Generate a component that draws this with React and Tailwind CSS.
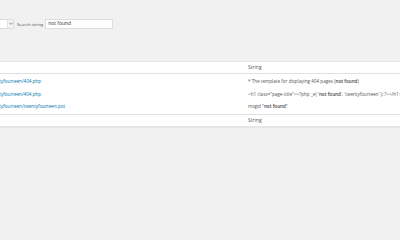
// Search results page (scaled down admin screen)
const rows = [
  {
    file: 'themes/twentyfourteen/404.php',
    pre: '* The template for displaying 404 pages (',
    hit: 'not found',
    post: ')',
  },
  {
    file: 'themes/twentyfourteen/404.php',
    pre: '<h1 class="page-title"><?php _e( \'',
    hit: 'not found',
    post: '\', \'twentyfourteen\' ); ?></h1>',
  },
  {
    file: 'themes/twentyfourteen/twentyfourteen.pot',
    pre: 'msgid "',
    hit: 'not found',
    post: '"',
  },
];

export default function App() {
  return (
    <div
      className="w-[400px] h-[240px] overflow-hidden bg-[#f1f1f1] text-[#555] relative"
      style={{ fontFamily: '"Open Sans", "Liberation Sans", sans-serif' }}
    >
      {/* Filter bar */}
      <div className="flex items-center pt-[18px] h-[29px]">
        <div className="flex items-stretch h-[10px] w-[15px] -ml-[1px] bg-white border border-[#ddd] rounded-[1px]">
          <div className="flex-1" />
          <div className="w-[6px] bg-[#f4f4f4] border-l border-[#e4e4e4] flex items-center justify-center">
            <svg width="4" height="3" viewBox="0 0 4 3">
              <path d="M0.3 0.6 L2 2.4 L3.7 0.6" fill="none" stroke="#666" strokeWidth="0.7" />
            </svg>
          </div>
        </div>
        <span className="ml-[3px] text-[4.3px] mt-[2px] leading-none whitespace-nowrap">Search string</span>
        <div className="ml-[2px] h-[10px] w-[68px] bg-white border border-[#ddd] flex items-center px-[2px]">
          <span className="text-[5px] text-[#333] leading-none whitespace-nowrap">not found</span>
        </div>
      </div>

      {/* Results table */}
      <div className="mt-[32px] -ml-[30px] w-[440px] bg-white border border-[#e5e5e5] shadow-[0_1px_1px_rgba(0,0,0,0.04)]">
        <div className="flex h-[12px] items-center border-b border-[#e1e1e1]">
          <div className="w-[277px]" />
          <span className="text-[5px] leading-none">String</span>
        </div>
        <div className="py-[1px]">
          {rows.map((r, i) => (
            <div key={i} className="flex h-[12.7px] items-center">
              <a className="w-[277px] text-[4.6px] leading-none text-[#0073aa] whitespace-nowrap">{r.file}</a>
              <span className="text-[4.6px] leading-none whitespace-nowrap">
                {r.pre}
                <b className="font-semibold text-[#444]">{r.hit}</b>
                {r.post}
              </span>
            </div>
          ))}
        </div>
        <div className="flex h-[12px] items-center border-t border-[#e1e1e1]">
          <div className="w-[277px]" />
          <span className="text-[5px] leading-none">String</span>
        </div>
      </div>
    </div>
  );
}
